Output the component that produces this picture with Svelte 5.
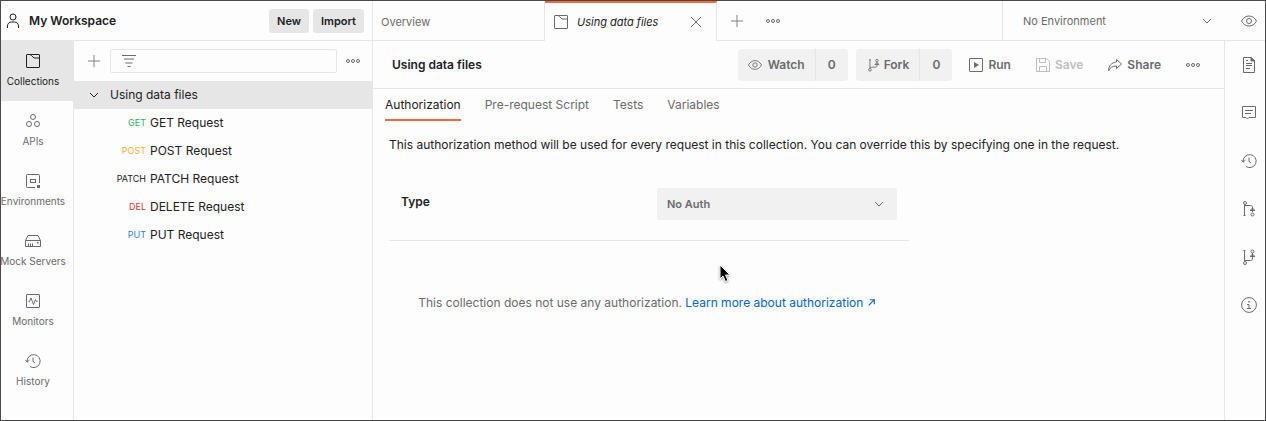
<script>
  const icons = {
    user: '<circle cx="8" cy="4" r="3"/><path d="M2.500 15v-2c0-2.500 1.800-4 4-4h3c2.200 0 4 1.500 4 4v2"/>',
    folder: '<rect x="1.500" y="1.500" width="13" height="13" rx=".5"/><path d="M5 1.500l1.500 1L9 5h5.500"/>',
    apis: '<circle cx="8" cy="4" r="2.500"/><circle cx="4" cy="11" r="2.500"/><circle cx="12" cy="11" r="2.500"/>',
    env: '<path d="M10 14.500H2.500a1 1 0 0 1-1-1v-11a1 1 0 0 1 1-1h11a1 1 0 0 1 1 1V10"/><rect x="5.500" y="6.500" width="5" height="3"/><path d="M12 12h3v3h-3z" fill="currentColor" stroke="none"/>',
    server: '<path d="M.5 7.500h15v6h-15zM.5 7.500l2.500-5h10l2.500 5M3.500 10.500v3M5.500 10.500v3M7.500 10.500v3"/><path d="M12 9h1.500v1.500H12z" fill="currentColor" stroke="none"/>',
    monitor: '<rect x="1.500" y="1.500" width="13" height="13" rx=".5"/><path d="M3.500 8.500h1L6 5l2.500 6.500 2-5 1 2h1"/>',
    history: '<path d="M2.200 9A6.500 6.500 0 1 1 5 13.500M.5 7l1.700 2.200L4.500 7M8 4.500v4l2 1.500"/>',
    plus: '<path d="M8 2v12M2 8h12"/>',
    dots: '<circle cx="3" cy="8" r="1.500"/><circle cx="8" cy="8" r="1.500"/><circle cx="13" cy="8" r="1.500"/>',
    filter: '<path d="M1 2.500h14M3 6h10M4.500 10h7M6.500 13.500h3"/>',
    chevron: '<path d="M4 6l4 4 4-4"/>',
    close: '<path d="M3 3l10 10M13 3L3 13"/>',
    eye: '<path d="M.5 8C2.500 4.500 5 3 8 3s5.500 1.500 7.500 5c-2 3.500-4.500 5-7.500 5S2.500 11.500.5 8z"/><circle cx="8" cy="8" r="2.500"/>',
    fork: '<path d="M4.500 2v9.500M12.500 5v4c0 1.200-.8 1.500-2 1.500H8c-2 0-3.500 0-3.500 1.500M10 7.500h5l-2.500-2.300zM3.500 2h2"/><circle cx="4.500" cy="13.500" r="1.500"/><circle cx="12.500" cy="3" r="1.500"/>',
    pull: '<path d="M3.500 4v11M3.500 4.500h6c1.200 0 2 .5 2 1.500v5M9 9.500h5l-2.500-2.300zM2.500 14.500h2"/><circle cx="4" cy="2" r="1.500"/><circle cx="11.500" cy="13.500" r="1.500"/>',
    branch: '<path d="M3.500 1v11M3.500 11.500h6c1.200 0 2-.5 2-1.500V4M9 7.500h5l-2.500-2.300zM2.500 1.500h2"/><circle cx="4" cy="14" r="1.500"/><circle cx="11.500" cy="2.500" r="1.500"/>',
    run: '<rect x="1.500" y="1.500" width="13" height="13" rx=".5"/><path d="M6 5l5 3-5 3z" fill="currentColor" stroke="none"/>',
    save: '<path d="M1.500 1.500h10l3 3v10h-13zM4.500 1.500v4h6v-4M4.500 14.500v-5h7v5"/>',
    share: '<path d="M9.500 2.500l5 4.500-5 4.500V9C5.500 9 3 10.500 1.500 14c0-5 3-8.500 8-9z"/>',
    doc: '<path d="M2.500.5h8l3 3v12h-11zM5 6.500h6M5 8.500h6M5 11.500h4M5 3.500h2"/><path d="M10 .5l3.500 3.500H10z" fill="currentColor"/>',
    comment: '<path d="M1.500 1.500h13v11H8L6.500 14 5 12.500H1.500zM4 5.500h8M4 8.500h6"/>',
    info: '<circle cx="8" cy="8" r="7.400"/><path d="M6 7.500h2v4M6 11.500h4"/><path d="M7.200 4h1.500v1.500H7.200z" fill="currentColor" stroke="none"/>',
    external: '<path d="M3 13L13 3M5 3h8v8" stroke-width="2"/>'
  };

  const nav = [
    ['folder', 'Collections'],
    ['apis', 'APIs'],
    ['env', 'Environments'],
    ['server', 'Mock Servers'],
    ['monitor', 'Monitors'],
    ['history', 'History']
  ];
  const requests = [
    ['GET', 'get'],
    ['POST', 'post'],
    ['PATCH', 'patch'],
    ['DELETE', 'delete'],
    ['PUT', 'put']
  ];
  const sections = ['Authorization', 'Pre-request Script', 'Tests', 'Variables'];
  const tools = [
    ['doc', 'Documentation'],
    ['comment', 'Comments'],
    ['history', 'Changelog'],
    ['pull', 'Pull requests'],
    ['branch', 'Forks'],
    ['info', 'Info']
  ];
  let page = $state('Collections');
  let section = $state('Authorization');
</script>

{#snippet icon(name, size = 16)}
  <svg class="icon" width={size} height={size} viewBox="0 0 16 16" aria-hidden="true">{@html icons[name]}</svg>
{/snippet}

<div class="app">
  <aside class="left">
    <header class="workspace">
      {@render icon('user')}
      <h1>My Workspace</h1>
      <button class="solid">New</button>
      <button class="solid">Import</button>
    </header>
    <div class="left-body">
      <nav class="nav" aria-label="Workspace">
        {#each nav as [glyph, label]}
          <button class="nav-item" class:active={page === label} onclick={() => (page = label)}>
            {@render icon(glyph)}
            <span>{label}</span>
          </button>
        {/each}
      </nav>
      <div class="collections">
        <div class="search">
          <button class="plain light" aria-label="Add collection">{@render icon('plus')}</button>
          <label class="filter">
            {@render icon('filter')}
            <input type="text" aria-label="Filter" />
          </label>
          <button class="plain" aria-label="More">{@render icon('dots')}</button>
        </div>
        <button class="collection">{@render icon('chevron')}Using data files</button>
        <ul>
          {#each requests as [method, kind]}
            <li>
              <a href="#{kind}"><span class="method {kind}">{method === 'DELETE' ? 'DEL' : method}</span>{method} Request</a>
            </li>
          {/each}
        </ul>
      </div>
    </div>
  </aside>

  <div class="right">
    <header class="tabs">
      <button class="tab">Overview</button>
      <div class="tab current">
        {@render icon('folder')}
        <em>Using data files</em>
        <button class="plain" aria-label="Close tab">{@render icon('close')}</button>
      </div>
      <div class="strip">
        <button class="plain light" aria-label="New tab">{@render icon('plus')}</button>
        <button class="plain" aria-label="Tab options">{@render icon('dots')}</button>
      </div>
      <div class="environment">
        <select aria-label="Environment"><option>No Environment</option></select>
        {@render icon('chevron')}
      </div>
      <button class="plain look" aria-label="Environment quick look">{@render icon('eye')}</button>
    </header>

    <div class="right-body">
      <main>
        <div class="title">
          <h2>Using data files</h2>
          <div class="split">
            <button>{@render icon('eye', 14)}Watch</button>
            <button class="count" aria-label="Watchers">0</button>
          </div>
          <div class="split">
            <button>{@render icon('fork', 14)}Fork</button>
            <button class="count" aria-label="Forks">0</button>
          </div>
          <div class="actions">
            <button class="action">{@render icon('run')}Run</button>
            <button class="action" disabled>{@render icon('save')}Save</button>
            <button class="action">{@render icon('share')}Share</button>
            <button class="plain" aria-label="More actions">{@render icon('dots')}</button>
          </div>
        </div>
        <nav class="sections" aria-label="Collection">
          {#each sections as label}
            <button class:active={section === label} onclick={() => (section = label)}>{label}</button>
          {/each}
        </nav>
        <section class="auth">
          <p>This authorization method will be used for every request in this collection. You can override this by specifying one in the request.</p>
          <div class="field">
            <label for="auth-type">Type</label>
            <div class="dropdown">
              <select id="auth-type"><option>No Auth</option></select>
              {@render icon('chevron')}
            </div>
          </div>
          <p class="note">This collection does not use any authorization. <a href="#authorization">Learn more about authorization {@render icon('external', 9)}</a></p>
        </section>
      </main>
      <aside class="tools">
        {#each tools as [glyph, label]}
          <button class="plain" aria-label={label}>{@render icon(glyph)}</button>
        {/each}
      </aside>
    </div>
  </div>

  <svg class="pointer" width="12" height="19" viewBox="0 0 12 19" aria-hidden="true">
    <path d="M1 1v14l3-3 2.500 5.500 2.500-1L6.500 11H11z" />
  </svg>
</div>

<style>
  :global(body) { margin: 0; }
  .app, .app * { box-sizing: border-box; }
  .app {
    position: relative;
    display: flex;
    min-height: 100vh;
    border: 1px solid #4a4a4a;
    background: #fdfdfd;
    color: #212121;
    font: 12px/16px Inter, sans-serif;
  }
  button, input, select { font: inherit; color: inherit; }
  button { border: 0; padding: 0; background: none; cursor: pointer; white-space: nowrap; }
  select { appearance: none; border: 0; width: 100%; }
  h1, h2, p, ul { margin: 0; padding: 0; }
  h1, h2 { font-size: 12px; font-weight: 600; }
  a { color: inherit; text-decoration: none; }
  .icon { flex: none; display: block; fill: none; stroke: currentColor; }
  .plain { display: flex; color: #6b6b6b; }
  .light { color: #808080; }

  .left { flex: none; display: flex; flex-direction: column; width: 372px; border-right: 1px solid #e6e6e6; }
  .workspace { display: flex; align-items: center; gap: 4px; height: 40px; padding: 0 8px 0 4px; border-bottom: 1px solid #e6e6e6; }
  h1 { flex: 1; padding-left: 4px; }
  .solid { height: 24px; padding: 0 8px; border-radius: 3px; background: #e6e6e6; font-size: 11px; font-weight: 600; }
  .left-body { flex: 1; display: flex; }
  .nav { flex: none; width: 73px; border-right: 1px solid #e6e6e6; }
  .nav-item {
    display: flex; flex-direction: column; align-items: center; gap: 4px;
    width: 100%; height: 60px; padding: 12px 8px 0 0;
    color: #6b6b6b; font-size: 10px;
  }
  .nav-item.active { background: #e6e6e6; color: #212121; }
  .collections { flex: 1; min-width: 0; }
  .search { display: flex; align-items: center; gap: 8px; height: 40px; padding: 0 11px 0 12px; }
  .filter { flex: 1; min-width: 0; display: flex; align-items: center; height: 24px; padding: 0 10px; border: 1px solid #e6e6e6; border-radius: 2px; color: #6b6b6b; }
  .filter input { flex: 1; min-width: 0; border: 0; background: none; outline: 0; }
  .collection { display: flex; align-items: center; gap: 8px; width: 100%; height: 28px; padding-left: 12px; background: #e6e6e6; }
  ul { list-style: none; }
  li a { display: flex; align-items: center; gap: 4px; height: 28px; }
  .method { width: 72px; text-align: right; font-size: 9px; }
  .get { color: #29b35a; }
  .post { color: #f2b42f; }
  .delete { color: #e5352b; }
  .put { color: #2f7fe5; }

  .right { flex: 1; min-width: 0; display: flex; flex-direction: column; }
  .tabs { display: flex; height: 40px; color: #6b6b6b; }
  .tabs > * { border-bottom: 1px solid #e6e6e6; }
  .tab { width: 172px; padding: 2px 8px 0; border-right: 1px solid #e6e6e6; text-align: left; font-size: 11px; }
  .tab.current { display: flex; align-items: center; gap: 8px; padding: 0 12px 0 8px; border-bottom: 0; border-top: 2px solid #f26b3a; }
  em { flex: 1; color: #212121; }
  .strip { flex: 1; display: flex; align-items: center; gap: 20px; padding-left: 12px; }
  .environment { position: relative; display: flex; align-items: center; width: 223px; border-left: 1px solid #e6e6e6; }
  .environment select { height: 32px; padding: 0 32px 0 20px; background: none; font-size: 11px; }
  .environment .icon, .dropdown .icon { position: absolute; right: 10px; pointer-events: none; }
  .look { align-items: center; width: 40px; padding-left: 16px; }

  .right-body { flex: 1; display: flex; }
  main { flex: 1; min-width: 0; }
  .title { display: flex; align-items: center; gap: 8px; height: 48px; padding: 0 23px 0 19px; border-bottom: 1px solid #e6e6e6; }
  h2 { flex: 1; }
  .split { display: flex; height: 32px; border-radius: 4px; background: #f1f1f1; color: #6b6b6b; }
  .split button { display: flex; align-items: center; gap: 4px; padding: 0 10px; font-weight: 600; }
  .split:first-of-type button { gap: 6px; }
  .split .count { width: 33px; justify-content: center; border-left: 1px solid #e6e6e6; }
  .actions { display: flex; align-items: center; gap: 24px; padding-left: 8px; }
  .action { display: flex; align-items: center; gap: 4px; color: #6b6b6b; font-weight: 600; }
  .action:disabled { color: #bfbfbf; }
  .sections { display: flex; gap: 24px; padding: 0 12px; color: #6b6b6b; }
  .sections button { height: 32px; padding-top: 2px; border-bottom: 2px solid transparent; }
  .sections .active { border-color: #f26b3a; color: #212121; }
  .auth { padding: 16px; }
  .field { display: flex; width: 520px; max-width: 100%; margin-top: 16px; padding: 19px 12px 20px; border-bottom: 1px solid #e6e6e6; }
  .field label { width: 256px; padding-top: 6px; font-weight: 600; }
  .dropdown { position: relative; display: flex; align-items: center; width: 240px; color: #6b6b6b; }
  .dropdown select { height: 32px; padding: 0 10px; border-radius: 3px; background: #f1f1f1; font-size: 11px; font-weight: 600; }
  .note { width: 520px; max-width: 100%; margin-top: 54px; padding-right: 4px; color: #6b6b6b; text-align: center; }
  .note a { color: #0265d2; }
  .note .icon { display: inline-block; }
  .tools { flex: none; display: flex; flex-direction: column; gap: 32px; width: 41px; padding: 16px 0 0 16px; border-left: 1px solid #e6e6e6; }
  .pointer { position: absolute; left: 718px; top: 263px; fill: #000; stroke: #fff; filter: drop-shadow(0 1px 1px #0006); }
</style>
